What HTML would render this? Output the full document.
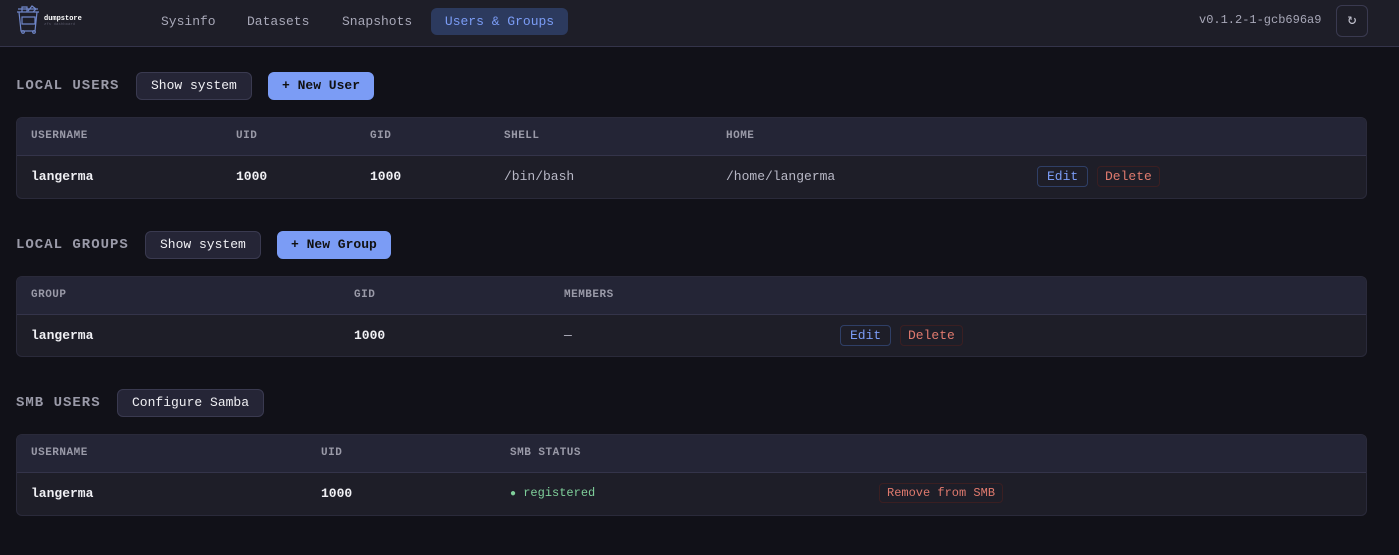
<!DOCTYPE html>
<html><head><meta charset="utf-8"><style>
*{margin:0;padding:0;box-sizing:border-box}
body{width:1399px;height:555px;background:#111118;font-family:"Liberation Mono","DejaVu Sans Mono",monospace;color:#e4e4ec;position:relative;overflow:hidden;font-size:13px}
.a{position:absolute;white-space:nowrap}
.hdr{position:absolute;left:0;top:0;width:1399px;height:47px;background:#1e1e28;border-bottom:1px solid #34344a}
.nav{color:#a8a8b8;font-size:13px;top:14px}
.sec{font-size:14px;font-weight:bold;color:#9a9aa8;letter-spacing:1px}
.btn{border:1px solid #3a3a50;background:#252536;border-radius:6px;color:#f0f0f4;font-size:13px;height:28px;line-height:26px;padding:0 14px}
.pri{background:#7b9cf5;border-color:#7b9cf5;color:#111;font-weight:bold;padding:0 13px}
.tbl{position:absolute;left:16px;width:1351px;background:#1e1e28;border:1px solid #2a2a3a;border-radius:6px;overflow:hidden}
.th{height:38px;background:#242536;border-bottom:1px solid #34344a;position:relative}
.th span{position:absolute;top:12px;font-size:11px;font-weight:bold;color:#9a9aa8;letter-spacing:0.5px}
.tr{height:42px;position:relative}
.tr span{position:absolute;top:13px}
.b{font-weight:bold;color:#f0f0f4}
.m{color:#b8b8c6}
.edit{border:1px solid #2f3f66;border-radius:4px;color:#7b9cf5;padding:2px 9px;top:10px!important}
.del{border:1px solid #3a1f22;border-radius:4px;color:#e07a6e;padding:2px 7px;top:10px!important}
</style></head><body>
<div class="hdr"></div>
<svg class="a" style="left:15px;top:5px" width="28" height="30" viewBox="0 0 28 30" fill="none" stroke="#6f86c8" stroke-width="1.2"><path d="M2 7h22M4 7l2 19h14l2-19M7 7V2h5v5M13 6l4-5 4 3-3 3M7 12h13v7H7zM3 4h20"/><circle cx="8" cy="27" r="1.3"/><circle cx="19" cy="27" r="1.3"/></svg>
<div class="a" style="left:44px;top:15px;font-size:7px;font-weight:bold;color:#fff">dumpstore</div>
<div class="a" style="left:44px;top:23px;font-size:4px;color:#556">zfs dashboard</div>
<div class="a nav" style="left:161px">Sysinfo</div>
<div class="a nav" style="left:247px">Datasets</div>
<div class="a nav" style="left:342px">Snapshots</div>
<div class="a" style="left:431px;top:8px;width:137px;height:27px;background:#2c3a5e;border-radius:6px;color:#7b9cf5;line-height:27px;text-align:center">Users &amp; Groups</div>
<div class="a" style="left:1199px;top:13px;font-size:12px;color:#a8a8b8">v0.1.2-1-gcb696a9</div>
<div class="a" style="left:1336px;top:5px;width:32px;height:32px;border:1px solid #3a3a50;border-radius:6px;background:#1e1e28;color:#c0c0cc;text-align:center;line-height:30px;font-size:15px">↻</div>

<div class="a sec" style="left:16px;top:78px">LOCAL USERS</div>
<div class="a btn" style="left:136px;top:72px">Show system</div>
<div class="a btn pri" style="left:268px;top:72px">+ New User</div>
<div class="tbl" style="top:117px;height:82px">
<div class="th"><span style="left:14px">USERNAME</span><span style="left:219px">UID</span><span style="left:353px">GID</span><span style="left:487px">SHELL</span><span style="left:709px">HOME</span></div>
<div class="tr"><span class="b" style="left:14px">langerma</span><span class="b" style="left:219px">1000</span><span class="b" style="left:353px">1000</span><span class="m" style="left:487px">/bin/bash</span><span class="m" style="left:709px">/home/langerma</span><span class="edit" style="left:1020px">Edit</span><span class="del" style="left:1080px">Delete</span></div>
</div>

<div class="a sec" style="left:16px;top:237px">LOCAL GROUPS</div>
<div class="a btn" style="left:145px;top:231px">Show system</div>
<div class="a btn pri" style="left:277px;top:231px">+ New Group</div>
<div class="tbl" style="top:276px;height:81px">
<div class="th"><span style="left:14px">GROUP</span><span style="left:337px">GID</span><span style="left:547px">MEMBERS</span></div>
<div class="tr"><span class="b" style="left:14px">langerma</span><span class="b" style="left:337px">1000</span><span class="m" style="left:547px">—</span><span class="edit" style="left:823px">Edit</span><span class="del" style="left:883px">Delete</span></div>
</div>

<div class="a sec" style="left:16px;top:395px">SMB USERS</div>
<div class="a btn" style="left:117px;top:389px">Configure Samba</div>
<div class="tbl" style="top:434px;height:82px">
<div class="th"><span style="left:14px">USERNAME</span><span style="left:304px">UID</span><span style="left:493px">SMB STATUS</span></div>
<div class="tr"><span class="b" style="left:14px">langerma</span><span class="b" style="left:304px">1000</span><span style="left:493px;color:#7fcf9a;font-size:12px"><span style="position:static;font-size:10px">●</span> registered</span><span class="del" style="left:862px;font-size:12px">Remove from SMB</span></div>
</div>
</body></html>
